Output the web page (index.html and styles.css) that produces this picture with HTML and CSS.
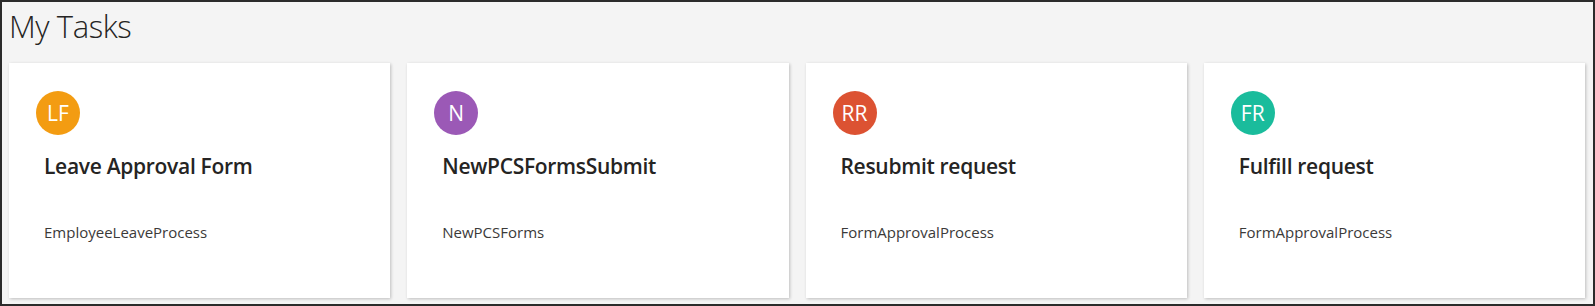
FILE: index.html
```html
<!DOCTYPE html>
<html>
  <head>
    <link rel="stylesheet" href="styles.css">
  </head>
  <body>
    <div class="frame">
      <h1 class="page-title">My Tasks</h1>
      <div class="task-list">
        <div class="task-card">
          <span class="avatar avatar-orange">LF</span>
          <div class="task-name">Leave Approval Form</div>
          <div class="task-process">EmployeeLeaveProcess</div>
        </div>
        <div class="task-card">
          <span class="avatar avatar-purple">N</span>
          <div class="task-name">NewPCSFormsSubmit</div>
          <div class="task-process">NewPCSForms</div>
        </div>
        <div class="task-card">
          <span class="avatar avatar-red">RR</span>
          <div class="task-name">Resubmit request</div>
          <div class="task-process">FormApprovalProcess</div>
        </div>
        <div class="task-card">
          <span class="avatar avatar-green">FR</span>
          <div class="task-name">Fulfill request</div>
          <div class="task-process">FormApprovalProcess</div>
        </div>
      </div>
    </div>
  </body>
</html>
```

FILE: styles.css
```css
* {
  font-family: "Open Sans", "Noto Sans", sans-serif;
  padding: 0;
  margin: 0;
  box-sizing: border-box;
}

body {
  margin: 0;
}

.frame {
  width: 1595px;
  height: 306px;
  border: solid 2px #2b2b2b;
  background: #f4f4f4;
  padding: 4px 8px 6px 7px;
}

.page-title {
  font-size: 31px;
  font-weight: 300;
  line-height: 40px;
  color: #252423;
  letter-spacing: -0.4px;
}

.task-list {
  display: grid;
  grid-template-columns: repeat(4, 1fr);
  gap: 17px;
  margin-top: 17px;
}

.task-card {
  height: 235px;
  background: white;
  box-shadow: 1px 1px 3px rgba(0, 0, 0, 0.22);
  padding: 28px 27px;
}

.avatar {
  display: flex;
  align-items: center;
  justify-content: center;
  width: 44px;
  height: 44px;
  border-radius: 50%;
  color: white;
  font-size: 21px;
  line-height: 1;
}

.avatar-orange {
  background: #f39c12;
}

.avatar-purple {
  background: #9b59b6;
}

.avatar-red {
  background: #dc5232;
}

.avatar-green {
  background: #1abc9c;
}

.task-name {
  margin: 17px 0 0 8px;
  font-size: 21px;
  font-weight: 600;
  line-height: 28px;
  color: #252423;
  letter-spacing: -0.3px;
}

.task-process {
  margin: 42px 0 0 8px;
  font-size: 15px;
  line-height: 20px;
  color: #3b3a39;
}
```
